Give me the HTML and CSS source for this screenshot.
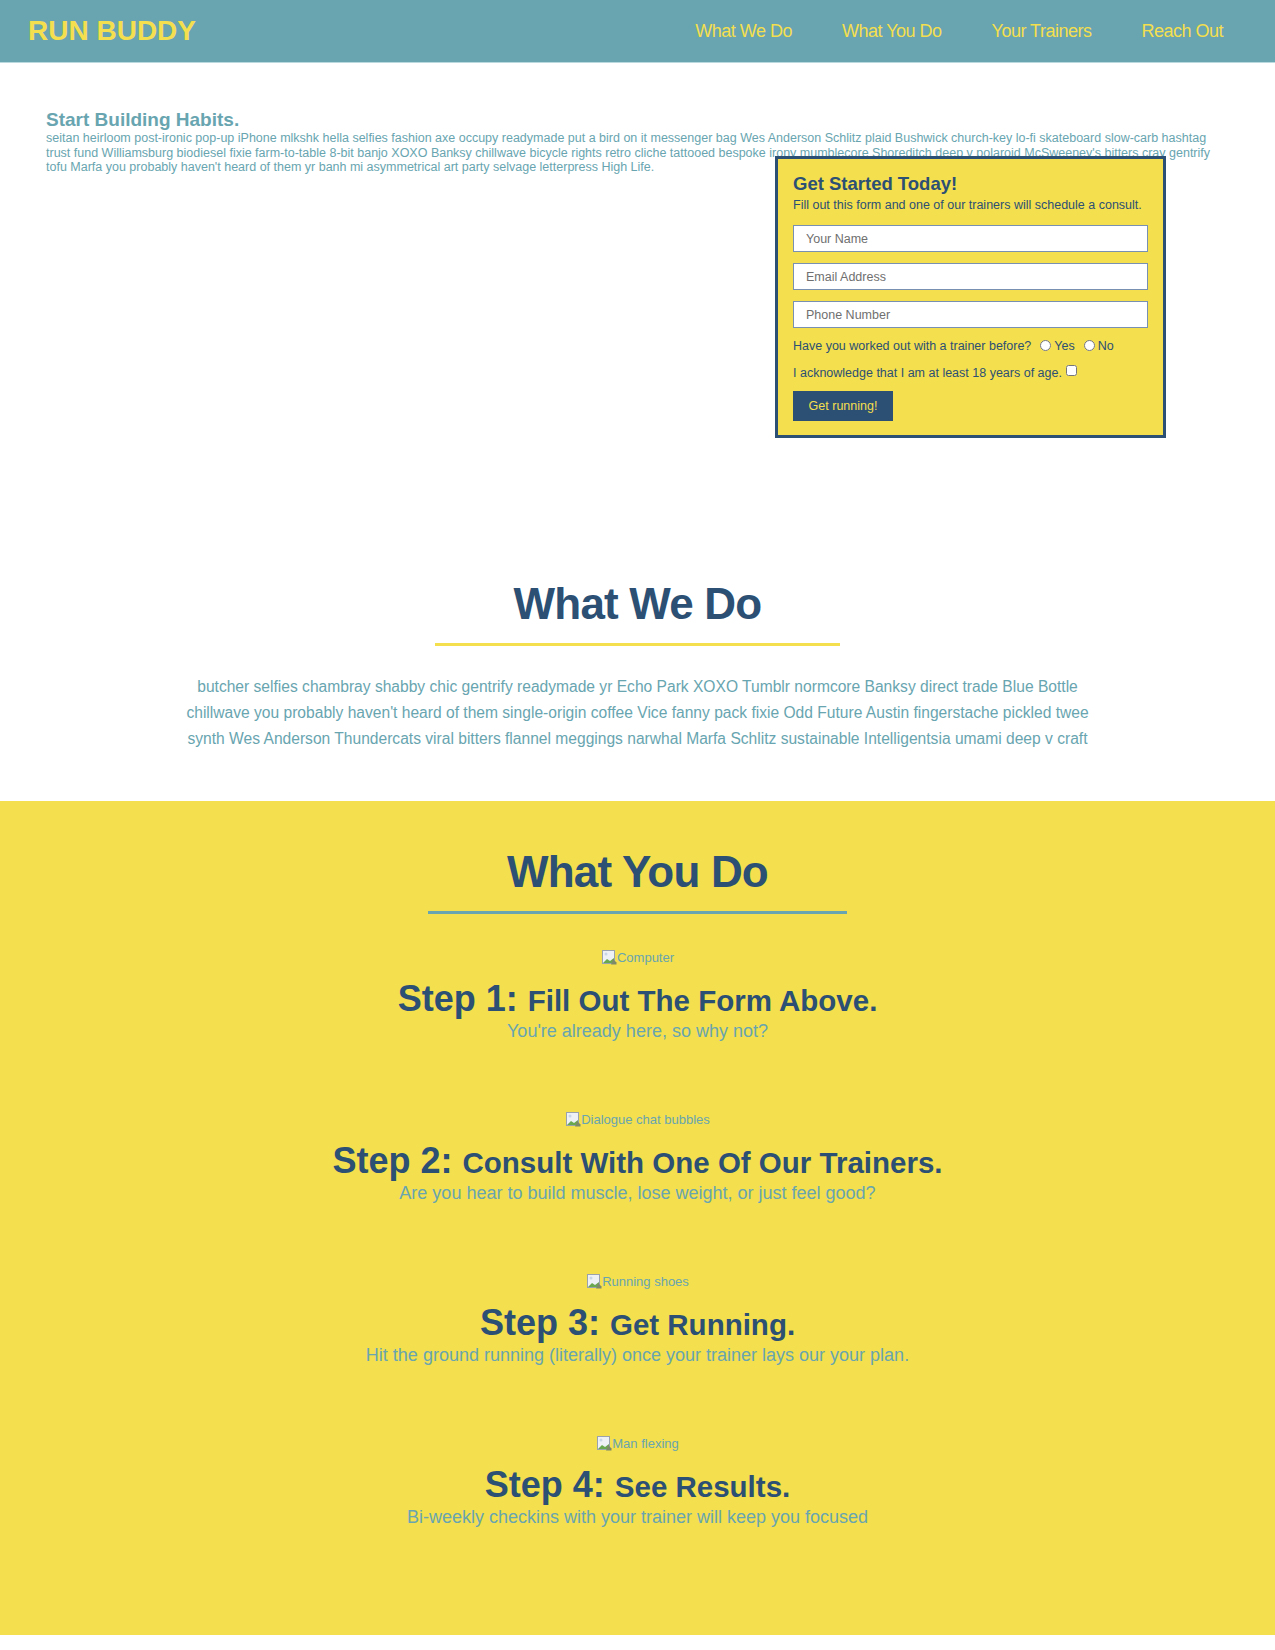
FILE: index.html
```html
<!DOCTYPE html>
<html lang="en">
<head>
<meta charset="utf-8">
<title>Run Buddy</title>
<link rel="stylesheet" href="styles.css">
</head>
<body>
<header class="site-header">
  <h1 class="logo">RUN BUDDY</h1>
  <nav class="main-nav">
    <a href="#what-we-do">What We Do</a>
    <a href="#what-you-do">What You Do</a>
    <a href="#your-trainers">Your Trainers</a>
    <a href="#reach-out">Reach Out</a>
  </nav>
</header>

<section class="hero">
  <h2 class="hero-title">Start Building Habits.</h2>
  <p class="hero-text">seitan heirloom post-ironic pop-up iPhone mlkshk hella selfies fashion axe occupy readymade put a bird on it messenger bag Wes Anderson Schlitz plaid Bushwick church-key lo-fi skateboard slow-carb hashtag trust fund Williamsburg biodiesel fixie farm-to-table 8-bit banjo XOXO Banksy chillwave bicycle rights retro cliche tattooed bespoke irony mumblecore Shoreditch deep v polaroid McSweeney's bitters cray gentrify tofu Marfa you probably haven't heard of them yr banh mi asymmetrical art party selvage letterpress High Life.</p>

  <form class="hero-form">
    <h3 class="form-title">Get Started Today!</h3>
    <p class="form-intro">Fill out this form and one of our trainers will schedule a consult.</p>
    <input class="form-input" type="text" placeholder="Your Name">
    <input class="form-input" type="text" placeholder="Email Address">
    <input class="form-input last" type="text" placeholder="Phone Number">
    <div class="form-row">
      <span>Have you worked out with a trainer before?</span>
      <label class="choice"><input type="radio" name="trainer" class="radio">Yes</label>
      <label class="choice"><input type="radio" name="trainer" class="radio">No</label>
    </div>
    <div class="form-row">
      <span>I acknowledge that I am at least 18 years of age.</span>
      <input type="checkbox" class="check">
    </div>
    <button type="button" class="form-button">Get running!</button>
  </form>
</section>

<section class="about" id="what-we-do">
  <h2 class="section-title yellow-rule">What We Do</h2>
  <p class="about-text">butcher selfies chambray shabby chic gentrify readymade yr Echo Park XOXO Tumblr normcore Banksy direct trade Blue Bottle chillwave you probably haven't heard of them single-origin coffee Vice fanny pack fixie Odd Future Austin fingerstache pickled twee synth Wes Anderson Thundercats viral bitters flannel meggings narwhal Marfa Schlitz sustainable Intelligentsia umami deep v craft</p>
</section>

<section class="steps" id="what-you-do">
  <h2 class="section-title teal-rule">What You Do</h2>

  <div class="step">
    <div class="step-img"><svg class="broken" width="16" height="16" viewBox="0 0 16 16"><rect x="1.5" y="1.5" width="12" height="13" fill="#eef1f6" stroke="#9aa3ad"/><path d="M2 14 L6 10 L9 12 L13 9 L13 14 Z" fill="#6aa84f"/><circle cx="5" cy="5" r="1.5" fill="#c9d6e8"/><path d="M12 10 L15.5 13.5 L15.5 15.5 L10 15.5 Z" fill="#7c8a6a"/></svg><span>Computer</span></div>
    <h3 class="step-title"><span class="step-num">Step 1:</span> <span class="step-name">Fill Out The Form Above.</span></h3>
    <p class="step-text">You're already here, so why not?</p>
  </div>

  <div class="step">
    <div class="step-img"><svg class="broken" width="16" height="16" viewBox="0 0 16 16"><rect x="1.5" y="1.5" width="12" height="13" fill="#eef1f6" stroke="#9aa3ad"/><path d="M2 14 L6 10 L9 12 L13 9 L13 14 Z" fill="#6aa84f"/><circle cx="5" cy="5" r="1.5" fill="#c9d6e8"/><path d="M12 10 L15.5 13.5 L15.5 15.5 L10 15.5 Z" fill="#7c8a6a"/></svg><span>Dialogue chat bubbles</span></div>
    <h3 class="step-title"><span class="step-num">Step 2:</span> <span class="step-name">Consult With One Of Our Trainers.</span></h3>
    <p class="step-text">Are you hear to build muscle, lose weight, or just feel good?</p>
  </div>

  <div class="step">
    <div class="step-img"><svg class="broken" width="16" height="16" viewBox="0 0 16 16"><rect x="1.5" y="1.5" width="12" height="13" fill="#eef1f6" stroke="#9aa3ad"/><path d="M2 14 L6 10 L9 12 L13 9 L13 14 Z" fill="#6aa84f"/><circle cx="5" cy="5" r="1.5" fill="#c9d6e8"/><path d="M12 10 L15.5 13.5 L15.5 15.5 L10 15.5 Z" fill="#7c8a6a"/></svg><span>Running shoes</span></div>
    <h3 class="step-title"><span class="step-num">Step 3:</span> <span class="step-name">Get Running.</span></h3>
    <p class="step-text">Hit the ground running (literally) once your trainer lays our your plan.</p>
  </div>

  <div class="step">
    <div class="step-img"><svg class="broken" width="16" height="16" viewBox="0 0 16 16"><rect x="1.5" y="1.5" width="12" height="13" fill="#eef1f6" stroke="#9aa3ad"/><path d="M2 14 L6 10 L9 12 L13 9 L13 14 Z" fill="#6aa84f"/><circle cx="5" cy="5" r="1.5" fill="#c9d6e8"/><path d="M12 10 L15.5 13.5 L15.5 15.5 L10 15.5 Z" fill="#7c8a6a"/></svg><span>Man flexing</span></div>
    <h3 class="step-title"><span class="step-num">Step 4:</span> <span class="step-name">See Results.</span></h3>
    <p class="step-text">Bi-weekly checkins with your trainer will keep you focused</p>
  </div>
</section>
</body>
</html>
```

FILE: styles.css
```css
* {
  box-sizing: border-box;
}

body {
  margin: 0;
  font-family: "Liberation Sans", Arial, Helvetica, sans-serif;
  color: #68a5b0;
  background: #ffffff;
}

/* Header */
.site-header {
  height: 63px;
  background: #68a5b0;
  border-bottom: 1px solid #b9d9df;
  display: flex;
  align-items: center;
  justify-content: space-between;
  padding: 0 52px 0 28px;
}

.logo {
  margin: 0;
  font-size: 28px;
  font-weight: bold;
  color: #f4df4e;
  line-height: 1;
}

.main-nav {
  display: flex;
  gap: 50px;
}

.main-nav a {
  color: #f4df4e;
  text-decoration: none;
  font-size: 18px;
  letter-spacing: -0.5px;
}

/* Hero */
.hero {
  position: relative;
  height: 463px;
  padding: 46px 46px 0;
}

.hero-title {
  margin: 0;
  font-size: 19px;
  font-weight: bold;
  line-height: normal;
}

.hero-text {
  margin: 0;
  font-size: 12.5px;
  line-height: 14.5px;
}

.hero-form {
  position: absolute;
  top: 93px;
  right: 109px;
  width: 391px;
  background: #f4df4e;
  border: 3px solid #2c4f74;
  padding: 14px 15px 14px;
  color: #2c4f74;
}

.form-title {
  margin: 0 0 3px;
  font-size: 18.5px;
  font-weight: bold;
  line-height: normal;
}

.form-intro {
  margin: 0 0 12px;
  font-size: 12.5px;
  line-height: 15px;
}

.form-input {
  display: block;
  width: 100%;
  height: 27px;
  margin: 0 0 11px;
  padding: 0 12px;
  border: 1px solid #7891b3;
  background: #ffffff;
  font-family: inherit;
  font-size: 12.5px;
  color: #2c4f74;
}

.form-input::placeholder {
  color: #6f6f6f;
}

.form-input.last {
  margin-bottom: 10px;
}

.form-row {
  display: flex;
  align-items: center;
  height: 15px;
  margin-bottom: 12px;
  font-size: 12.5px;
}

.choice {
  display: flex;
  align-items: center;
  margin-left: 6px;
}

.radio {
  width: 11px;
  height: 11px;
  margin: 0 3px 0 3px;
}

.check {
  width: 11px;
  height: 11px;
  margin: 0 0 0 4px;
  position: relative;
  top: -2px;
}

.form-row:last-of-type {
  margin-bottom: 11px;
}

.form-button {
  display: block;
  width: 100px;
  height: 30px;
  border: none;
  background: #2c4f74;
  color: #f4df4e;
  font-family: inherit;
  font-size: 12.5px;
  padding: 0;
}

/* Section titles */
.section-title {
  display: inline-block;
  margin: 0;
  padding: 0 79px 14px;
  font-size: 44px;
  font-weight: bold;
  letter-spacing: -0.8px;
  line-height: normal;
  color: #2c4f74;
}

.yellow-rule {
  border-bottom: 3px solid #f4df4e;
}

.teal-rule {
  border-bottom: 3px solid #68a5b0;
}

/* What we do */
.about {
  text-align: center;
  padding: 53px 0 49px;
}

.about-text {
  max-width: 915px;
  margin: 28px auto 0;
  font-size: 15.6px;
  line-height: 26px;
}

/* What you do */
.steps {
  background: #f4df4e;
  text-align: center;
  padding: 46px 0 107px;
}

.step {
  margin-top: 69px;
}

.step:first-of-type {
  margin-top: 35px;
}

.step-img {
  display: flex;
  justify-content: center;
  align-items: center;
  height: 16px;
  font-size: 13px;
}

.broken {
  display: block;
}

.step-title {
  margin: 13px 0 0;
  font-size: 36px;
  font-weight: bold;
  line-height: normal;
  color: #2c4f74;
}

.step-num {
  font-size: 36px;
}

.step-name {
  font-size: 29.5px;
}

.step-text {
  margin: 1px 0 0;
  font-size: 18px;
  line-height: normal;
}
```
